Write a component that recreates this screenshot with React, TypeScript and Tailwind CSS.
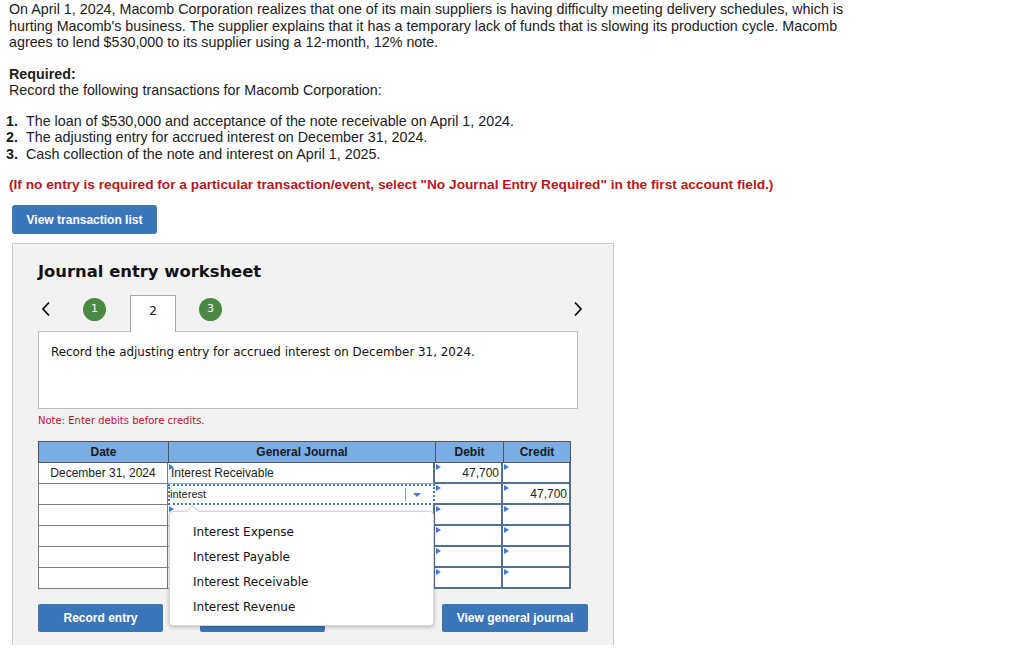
import React from "react";

const Tri = ({ className = "" }: { className?: string }) => (
  <span
    className={
      "absolute left-[1px] top-[1px] w-0 h-0 border-y-[3px] border-y-transparent border-l-[5px] border-l-[#3b7dd8] " +
      className
    }
  />
);

const LeftChev = () => (
  <svg width="12" height="16" viewBox="0 0 12 16" className="block">
    <polyline points="9,1.5 3,8 9,14.5" fill="none" stroke="#111" strokeWidth="1.8" />
  </svg>
);
const RightChev = () => (
  <svg width="12" height="16" viewBox="0 0 12 16" className="block">
    <polyline points="3,1.5 9,8 3,14.5" fill="none" stroke="#111" strokeWidth="1.8" />
  </svg>
);

export default function App() {
  const dateCell =
    "h-[21px] border-l border-r border-b border-[#7d7d7d] bg-white flex items-center justify-center text-[12px]";
  const gjCell = "relative h-[21px] bg-white border-b border-[#9aa9bb]";
  const dcCell =
    "relative h-[21px] bg-white border-r-2 border-b-2 border-[#50709a] flex items-center justify-end pr-[2px] text-[12px] text-[#222]";
  const head =
    "h-[22px] bg-[#7aade3] border-t border-b border-[#555] flex items-center justify-center text-[12px] font-bold text-[#1a1a1a]";
  return (
    <div className="relative w-[1024px] h-[652px] overflow-hidden bg-white text-[#1b1b1b] font-['Liberation_Sans',Arial,sans-serif]">
      <div className="pl-[9px] pt-[1px] text-[14.3px] leading-[16.5px]">
        <p>
          On April 1, 2024, Macomb Corporation realizes that one of its main suppliers is having difficulty meeting
          delivery schedules, which is
          <br />
          hurting Macomb's business. The supplier explains that it has a temporary lack of funds that is slowing its
          production cycle. Macomb
          <br />
          agrees to lend $530,000 to its supplier using a 12-month, 12% note.
        </p>
        <p className="mt-[15px] font-bold">Required:</p>
        <p>Record the following transactions for Macomb Corporation:</p>
        <ol className="mt-[14px] -ml-[9px]">
          <li className="flex">
            <span className="w-[18px] text-right font-bold">1.</span>
            <span className="ml-[8px]">
              The loan of $530,000 and acceptance of the note receivable on April 1, 2024.
            </span>
          </li>
          <li className="flex">
            <span className="w-[18px] text-right font-bold">2.</span>
            <span className="ml-[8px]">The adjusting entry for accrued interest on December 31, 2024.</span>
          </li>
          <li className="flex">
            <span className="w-[18px] text-right font-bold">3.</span>
            <span className="ml-[8px]">Cash collection of the note and interest on April 1, 2025.</span>
          </li>
        </ol>
        <p className="mt-[15px] text-[13.7px] leading-[16px] font-bold text-[#c0141c]">
          (If no entry is required for a particular transaction/event, select "No Journal Entry Required" in the first
          account field.)
        </p>
      </div>
      <button className="mt-[12px] ml-[12px] w-[145px] h-[29px] rounded-[3px] bg-[#3b76b9] text-white text-[12px] font-bold">
        View transaction list
      </button>

      <div className="mt-[9px] ml-[12px] w-[602px] h-[402px] border border-b-0 border-[#c8c8c8] bg-[#f2f2f2] pl-[25px]">
        <h2 className="pt-[18px] text-[16.4px] leading-[20px] font-bold text-[#111] font-['DejaVu_Sans',Verdana,sans-serif]">
          Journal entry worksheet
        </h2>
        <div className="mt-[13px] w-[546px] h-[36px] flex items-start font-['DejaVu_Sans',Verdana,sans-serif]">
          <div className="mt-[6px] ml-[2px]">
            <LeftChev />
          </div>
          <div className="mt-[3px] ml-[31px] w-[23px] h-[23px] rounded-full bg-[#4a8a42] text-white text-[11px] flex items-center justify-center">
            1
          </div>
          <div className="relative z-10 ml-[24px] w-[46px] h-[37px] bg-white border border-b-0 border-[#a9a9a9] flex items-center justify-center text-[12px] text-[#111] pb-[7px]">
            2
          </div>
          <div className="mt-[3px] ml-[23px] w-[23px] h-[23px] rounded-full bg-[#4a8a42] text-white text-[11px] flex items-center justify-center">
            3
          </div>
          <div className="mt-[6px] ml-auto">
            <RightChev />
          </div>
        </div>
        <div className="w-[540px] h-[78px] border border-[#bdbdbd] bg-white pl-[12px] pt-[12px] text-[11.9px] leading-[16px] text-[#111] font-['DejaVu_Sans',Verdana,sans-serif]">
          Record the adjusting entry for accrued interest on December 31, 2024.
        </div>
        <p className="mt-[5px] text-[10px] leading-[14px] text-[#c8102e] font-['DejaVu_Sans',Verdana,sans-serif]">
          Note: Enter debits before credits.
        </p>

        <div className="mt-[13px] w-[533px] grid grid-cols-[130px_267px_68px_68px]">
          <div className={head + " border-l"}>Date</div>
          <div className={head + " border-l"}>General Journal</div>
          <div className={head + " border-l"}>Debit</div>
          <div className={head + " border-x"}>Credit</div>

          {/* row 1 */}
          <div className={dateCell}>December 31, 2024</div>
          <div className={gjCell + " border-r-2 border-r-[#50709a] flex items-center pl-[3px] text-[12px]"}>
            <Tri />
            Interest Receivable
          </div>
          <div className={dcCell}>
            <Tri />
            47,700
          </div>
          <div className={dcCell}>
            <Tri />
          </div>

          {/* row 2 */}
          <div className={dateCell}></div>
          <div className="relative h-[21px] bg-white border-2 border-dotted border-[#3b7dd8] flex items-center text-[11px]">
            interest
            <span className="absolute right-[27px] top-[2px] bottom-[2px] w-px bg-[#7f9fc6]" />
            <span className="absolute right-[12px] top-[7px] w-0 h-0 border-x-[4px] border-x-transparent border-t-[4px] border-t-[#3b7dd8]" />
          </div>
          <div className={dcCell}>
            <Tri />
          </div>
          <div className={dcCell}>
            <Tri />
            47,700
          </div>

          {[0, 1, 2, 3].map((i) => (
            <React.Fragment key={i}>
              <div className={dateCell}></div>
              <div className={gjCell + " border-r-2 border-r-[#50709a]"}>
                <Tri />
              </div>
              <div className={dcCell}>
                <Tri />
              </div>
              <div className={dcCell}>
                <Tri />
              </div>
            </React.Fragment>
          ))}
        </div>

        <div className="mt-[15px] flex">
          <button className="w-[125px] h-[28px] rounded-[2px] bg-[#3b76b9] text-white text-[12px] font-bold">
            Record entry
          </button>
          <button className="ml-[37px] w-[125px] h-[28px] rounded-[2px] bg-[#3b76b9]" aria-label="Clear entry" />
          <button className="ml-[117px] w-[146px] h-[28px] rounded-[2px] bg-[#3b76b9] text-white text-[12px] font-bold">
            View general journal
          </button>
        </div>
      </div>

      {/* dropdown overlay */}
      <div className="absolute left-[169px] top-[511px] w-[265px] h-[115px] bg-white rounded-[4px] border border-[#d6d6d6] shadow-[0_1px_4px_rgba(0,0,0,0.25)] pt-[7px] font-['DejaVu_Sans',Verdana,sans-serif] text-[12px] text-[#111]">
        <span className="absolute left-[18px] -top-[5px] w-[9px] h-[9px] bg-white border-l border-t border-[#cfcfcf] rotate-45" />
        {["Interest Expense", "Interest Payable", "Interest Receivable", "Interest Revenue"].map((t) => (
          <div key={t} className="h-[25px] flex items-center pl-[23px]">
            {t}
          </div>
        ))}
      </div>
    </div>
  );
}
